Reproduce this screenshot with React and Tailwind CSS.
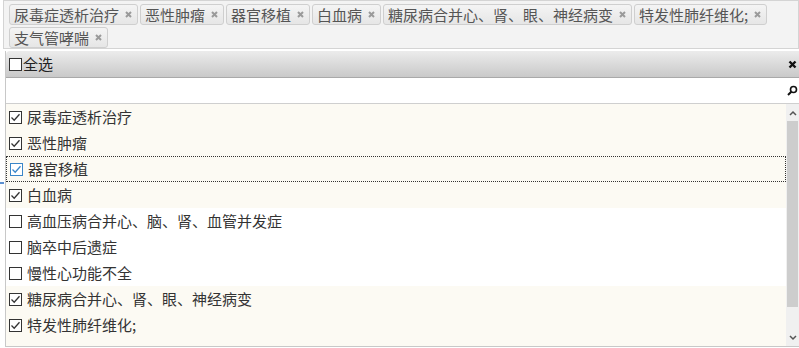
import React from "react";

const tagsRow1 = ["尿毒症透析治疗", "恶性肿瘤", "器官移植", "白血病", "糖尿病合并心、肾、眼、神经病变", "特发性肺纤维化;"];
const tagsRow2 = ["支气管哮喘"];

const items = [
  { t: "尿毒症透析治疗", c: true },
  { t: "恶性肿瘤", c: true },
  { t: "器官移植", c: true, focus: true },
  { t: "白血病", c: true },
  { t: "高血压病合并心、脑、肾、血管并发症", c: false },
  { t: "脑卒中后遗症", c: false },
  { t: "慢性心功能不全", c: false },
  { t: "糖尿病合并心、肾、眼、神经病变", c: true },
  { t: "特发性肺纤维化;", c: true },
];

function Tag({ text }) {
  return (
    <div className="flex items-center h-[21px] border border-[#cfcfcf] rounded-[3px] bg-gradient-to-b from-[#f4f4f4] to-[#e6e6e6] pl-[4px] pr-[5px] text-[#555]">
      <span className="leading-[19px]">{text}</span>
      <span className="ml-[6px] w-[7px] flex items-center justify-center">
        <svg width="7" height="7" viewBox="0 0 7 7">
          <path d="M1 1L6 6M6 1L1 6" stroke="#9a9a9a" strokeWidth="2" />
        </svg>
      </span>
    </div>
  );
}

function Box({ checked, blue }) {
  const col = blue ? "#3a86c8" : "#333";
  return (
    <svg width="13" height="13" viewBox="0 0 13 13" className="shrink-0">
      <rect x="0.5" y="0.5" width="12" height="12" fill="white" stroke={col} />
      {checked && <path d="M2.5 6.5L5.2 9.2L10.5 3.2" fill="none" stroke={col} strokeWidth="1.3" />}
    </svg>
  );
}

export default function App() {
  return (
    <div
      className="relative w-[799px] h-[348px] bg-white overflow-hidden text-[15px]"
      style={{ fontFamily: '"Noto Sans CJK SC", "Noto Sans", sans-serif' }}
    >
      <div className="ml-[3px] h-[49px] border border-[#d4d4d4] bg-[#f3f3f3] pl-[5px] pt-[3px] flex flex-col gap-[2px]">
        <div className="flex gap-[2px]">
          {tagsRow1.map((t) => (
            <Tag key={t} text={t} />
          ))}
        </div>
        <div className="flex gap-[2px]">
          {tagsRow2.map((t) => (
            <Tag key={t} text={t} />
          ))}
        </div>
      </div>

      <div className="absolute left-0 top-[182px] w-[4px] h-[2px] bg-[#5b8fd0]" />

      <div className="ml-[5px] mt-[2px] h-[296px] border-l border-b border-[#c8c8c8] flex flex-col">
        <div className="h-[27px] shrink-0 flex items-center rounded-tl-[4px] bg-gradient-to-b from-[#ececec] to-[#c9c9c9] border-b border-[#a9a9a9] pl-[3px] text-[#222]">
          <Box checked={false} />
          <span className="ml-[1px] leading-[20px]">全选</span>
          <span className="ml-auto mr-[2px]">
            <svg width="9" height="9" viewBox="0 0 9 9">
              <path d="M1.5 1.5L7.5 7.5M7.5 1.5L1.5 7.5" stroke="#111" strokeWidth="2.4" />
            </svg>
          </span>
        </div>
        <div className="h-[26px] shrink-0 flex items-center border-b border-[#cfcfcf] bg-white">
          <span className="ml-auto mr-[1px]">
            <svg width="11" height="11" viewBox="0 0 11 11">
              <circle cx="6.5" cy="4.5" r="3" fill="none" stroke="#111" strokeWidth="1.6" />
              <path d="M4.3 6.7L1 10" stroke="#111" strokeWidth="2" />
            </svg>
          </span>
        </div>
        <div className="flex flex-1 min-h-0">
          <div className="flex-1 flex flex-col">
            {items.map((it) => (
              <div
                key={it.t}
                className={
                  "h-[26px] shrink-0 flex items-center pl-[3px] text-[#333] " +
                  (it.c ? "bg-[#fcfaf3] " : "bg-white ") +
                  (it.focus ? "border border-dotted border-[#333] pl-[2px]" : "")
                }
              >
                <Box checked={it.c} blue={it.focus} />
                <span className="ml-[5px] leading-[20px] whitespace-nowrap">{it.t}</span>
              </div>
            ))}
            <div className="flex-1 bg-[#fcfaf3]" />
          </div>
          <div className="w-[13px] flex flex-col bg-[#f0f0f0]">
            <div className="h-[17px] flex items-center justify-center">
              <svg width="8" height="6" viewBox="0 0 8 6">
                <path d="M1 5L4 2L7 5" fill="none" stroke="#555" strokeWidth="1.5" />
              </svg>
            </div>
            <div className="h-[186px] mx-[1px] bg-[#cdcdcd]" />
            <div className="flex-1" />
            <div className="h-[17px] flex items-center justify-center">
              <svg width="8" height="6" viewBox="0 0 8 6">
                <path d="M1 1L4 4L7 1" fill="none" stroke="#555" strokeWidth="1.5" />
              </svg>
            </div>
          </div>
        </div>
      </div>
    </div>
  );
}
